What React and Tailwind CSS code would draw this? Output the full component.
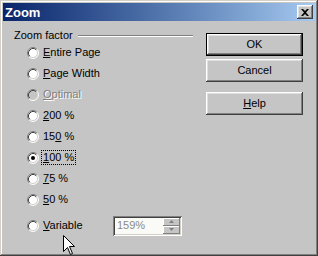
import React from "react";

function Radio({ checked, disabled }) {
  return (
    <svg width="12" height="12" viewBox="0 0 12 12" className="shrink-0">
      <circle cx="6" cy="6" r="5" fill={disabled ? "#c5c5c5" : "#fff"} />
      <path d="M2.11 9.89 A5.5 5.5 0 0 1 9.89 2.11" stroke="#808080" fill="none" strokeWidth="1" />
      <path d="M9.89 2.11 A5.5 5.5 0 0 1 2.11 9.89" stroke="#ffffff" fill="none" strokeWidth="1" />
      <path d="M2.82 9.18 A4.5 4.5 0 0 1 9.18 2.82" stroke="#404040" fill="none" strokeWidth="1" />
      <path d="M9.18 2.82 A4.5 4.5 0 0 1 2.82 9.18" stroke="#d4d0c8" fill="none" strokeWidth="1" />
      {checked && <circle cx="6" cy="6" r="2" fill="#000" />}
    </svg>
  );
}

function Row({ children, checked, disabled, className = "" }) {
  return (
    <div className={"flex items-center h-[21px] pl-[24px] " + className}>
      <Radio checked={checked} disabled={disabled} />
      <div className="ml-[4px] flex items-center">{children}</div>
    </div>
  );
}

const btn =
  "h-[23px] w-[97px] flex items-center justify-center bg-[#c5c5c5] shadow-[inset_-1px_-1px_#404040,inset_1px_1px_#ffffff,inset_-2px_-2px_#808080,inset_2px_2px_#dfdfdf]";

export default function App() {
  return (
    <div
      className="w-[318px] h-[256px] bg-[#c5c5c5] p-[3px] relative overflow-hidden shadow-[inset_-1px_-1px_#404040,inset_1px_1px_#d4d0c8,inset_-2px_-2px_#808080,inset_2px_2px_#ffffff]"
      style={{ fontFamily: '"Liberation Sans", Arial, sans-serif' }}
    >
      {/* Title bar */}
      <div className="h-[18px] flex items-center justify-between bg-gradient-to-r from-[#0a246a] to-[#a6caf0] pl-[2px] pr-[2px]">
        <span className="text-white font-bold text-[13px] leading-none">Zoom</span>
        <div className="w-[16px] h-[14px] bg-[#c5c5c5] flex items-center justify-center shadow-[inset_-1px_-1px_#404040,inset_1px_1px_#ffffff,inset_-2px_-2px_#808080,inset_2px_2px_#dfdfdf]">
          <svg width="8" height="7" viewBox="0 0 8 7">
            <path d="M0 0h2l2 2 2-2h2L5 3.5 8 7H6L4 5 2 7H0l3-3.5z" fill="#000" />
          </svg>
        </div>
      </div>

      {/* Body */}
      <div className="flex text-[11px] text-black leading-[13px]">
        {/* Left column */}
        <div className="w-[190px] pt-[8px]">
          <div className="flex items-center h-[13px] pl-[11px]">
            <span>Zoom factor</span>
            <div className="flex-1 ml-[5px] h-[2px] border-t border-b border-t-[#808080] border-b-white" />
          </div>
          <Row>
            <span><u>E</u>ntire Page</span>
          </Row>
          <Row>
            <span><u>P</u>age Width</span>
          </Row>
          <Row disabled>
            <span className="text-[#808080] [text-shadow:1px_1px_0_#ffffff]"><u>O</u>ptimal</span>
          </Row>
          <Row>
            <span><u>2</u>00 %</span>
          </Row>
          <Row>
            <span>15<u>0</u> %</span>
          </Row>
          <Row checked>
            <span className="border border-dotted border-black px-[1px] -ml-[2px]"><u>1</u>00 %</span>
          </Row>
          <Row>
            <span><u>7</u>5 %</span>
          </Row>
          <Row>
            <span><u>5</u>0 %</span>
          </Row>
          <div className="flex items-center h-[21px] pl-[24px] mt-[5px]">
            <Radio />
            <span className="ml-[4px] w-[70px]"><u>V</u>ariable</span>
            <div className="w-[69px] h-[20px] flex items-center bg-[#fafaf6] shadow-[inset_1px_1px_#808080,inset_-1px_-1px_#ffffff,inset_2px_2px_#404040,inset_-2px_-2px_#d4d0c8] pl-[4px] pr-[2px]">
              <span className="flex-1 text-[#8a8a8a]">159%</span>
              <div className="flex flex-col w-[17px] gap-0">
                <div className="h-[8px] bg-[#c5c5c5] flex items-center justify-center shadow-[inset_-1px_-1px_#808080,inset_1px_1px_#ffffff]">
                  <svg width="5" height="3" viewBox="0 0 5 3"><path d="M2.5 0L5 3H0z" fill="#808080" /></svg>
                </div>
                <div className="h-[8px] bg-[#c5c5c5] flex items-center justify-center shadow-[inset_-1px_-1px_#808080,inset_1px_1px_#ffffff]">
                  <svg width="5" height="3" viewBox="0 0 5 3"><path d="M0 0H5L2.5 3z" fill="#808080" /></svg>
                </div>
              </div>
            </div>
          </div>
        </div>

        {/* Right column */}
        <div className="ml-[13px] pt-[12px] flex flex-col">
          <div className="h-[23px] w-[97px] border border-black">
            <div className="w-full h-full flex items-center justify-center shadow-[inset_-1px_-1px_#404040,inset_1px_1px_#ffffff,inset_-2px_-2px_#808080,inset_2px_2px_#dfdfdf]">
              OK
            </div>
          </div>
          <div className={btn + " mt-[3px]"}>Cancel</div>
          <div className={btn + " mt-[10px]"}>
            <span><u>H</u>elp</span>
          </div>
        </div>
      </div>

      {/* Mouse cursor */}
      <svg className="absolute left-[63px] top-[235px]" width="13" height="21" viewBox="0 0 13 21">
        <path d="M0.5 0.5 L0.5 16.5 L4.5 12.5 L7.5 19.5 L9.5 18.5 L6.5 11.5 L11.5 11.5 Z" fill="#fff" stroke="#000" strokeWidth="1" />
      </svg>
    </div>
  );
}
